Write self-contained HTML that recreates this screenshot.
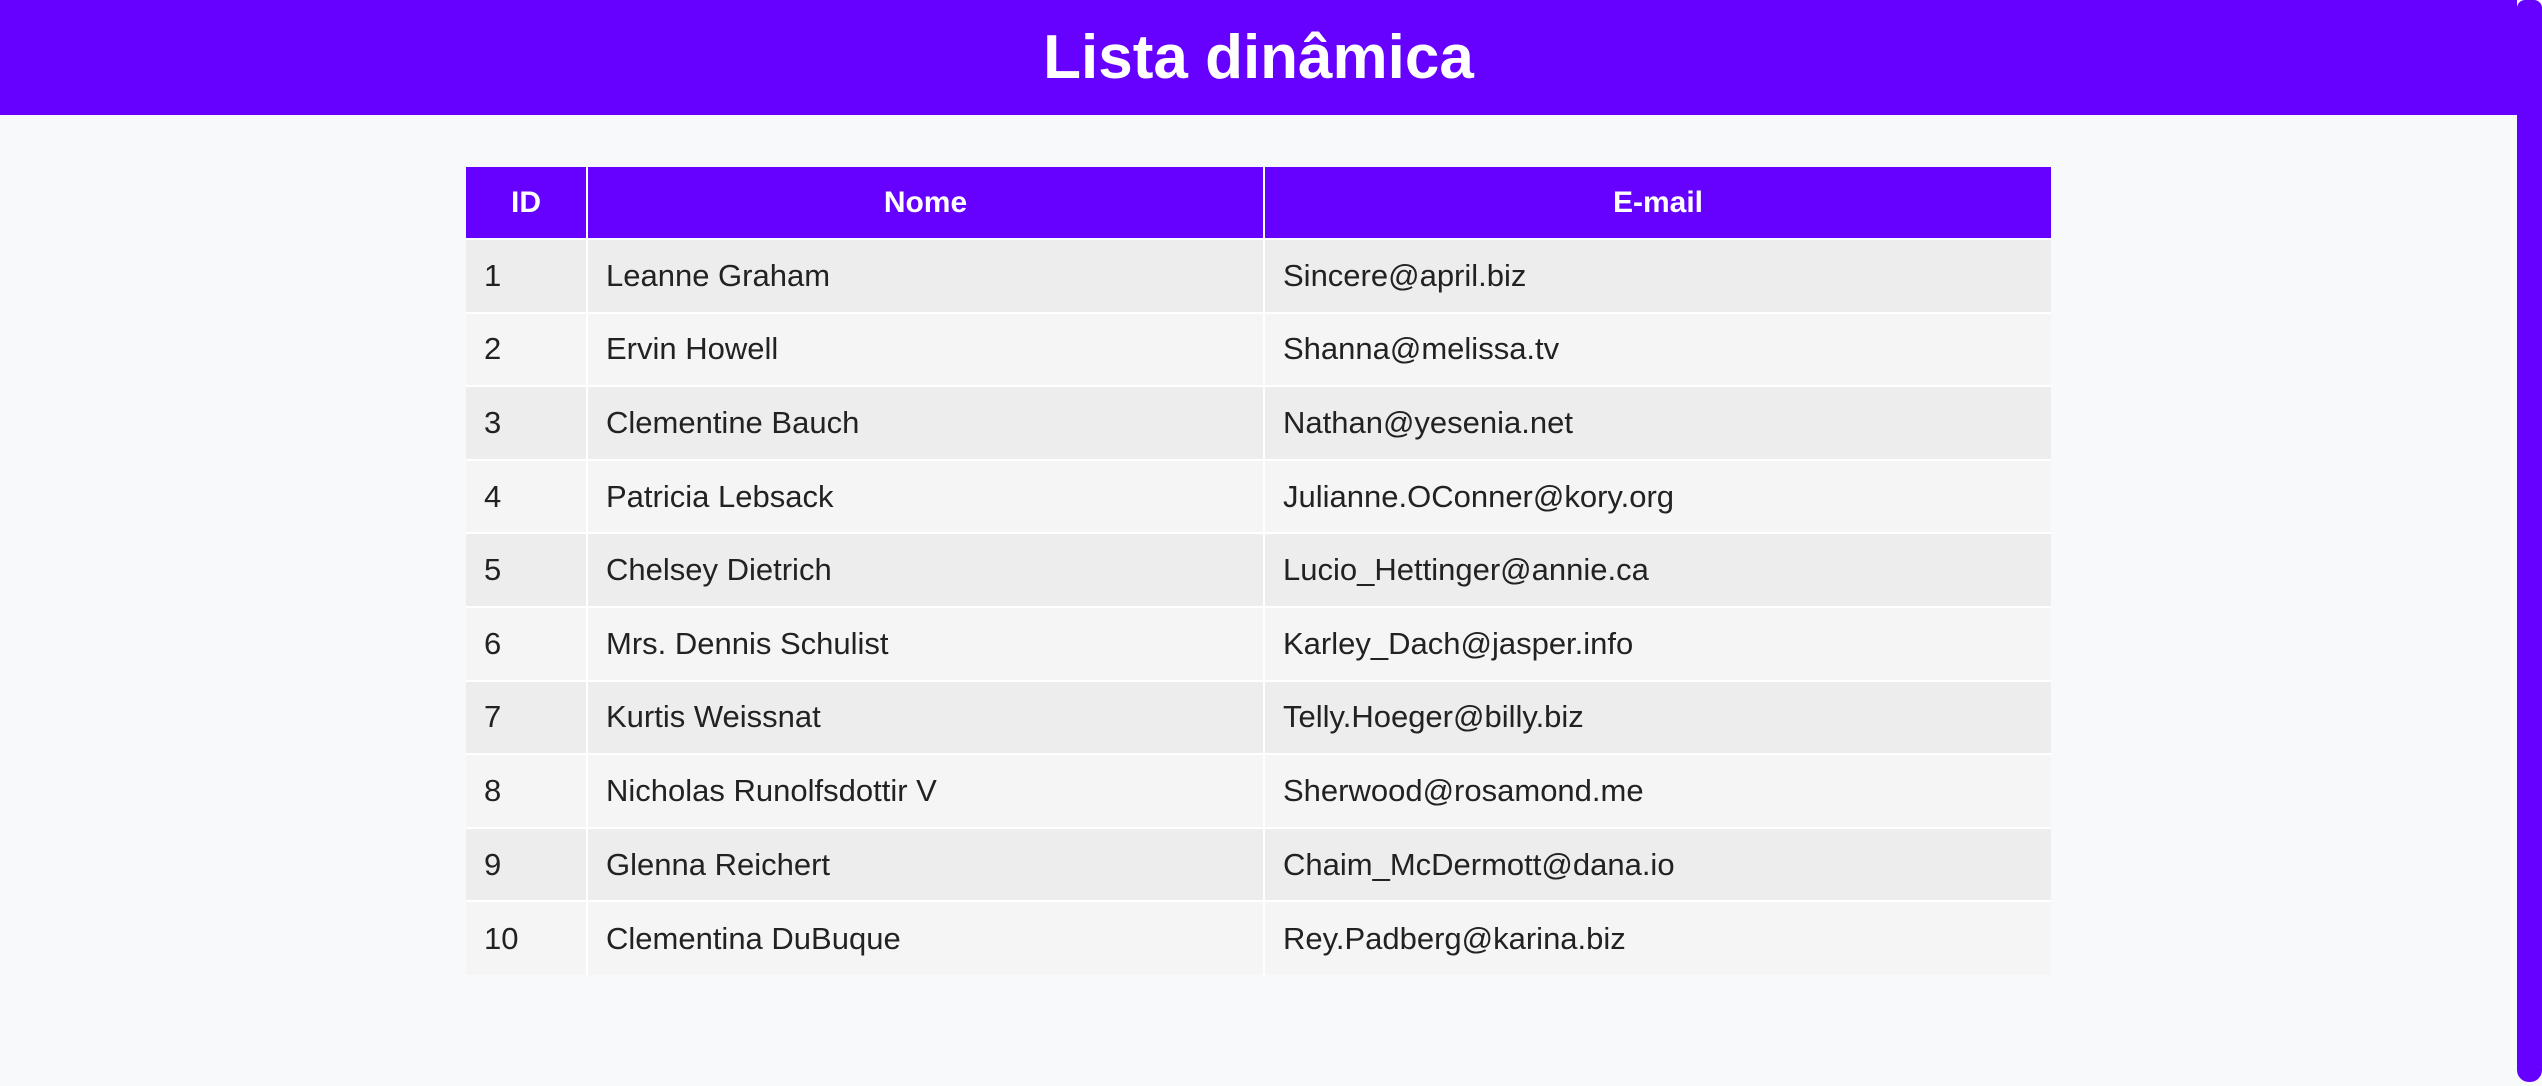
<!DOCTYPE html>
<html><head><meta charset="utf-8"><style>
html,body{margin:0;padding:0;width:2542px;height:1086px;overflow:hidden;background:#f8f9fb;font-family:"Liberation Sans",sans-serif;}
header{position:absolute;left:0;top:0;width:2517px;height:115px;background:#6600ff;color:#fff;text-align:center;font-size:62px;font-weight:bold;line-height:115px;}
.sb{position:absolute;left:2517px;top:0;width:25px;height:1082px;background:#6600ff;border-radius:8px 8px 12px 12px;}
table{position:absolute;left:466px;top:167px;width:1585px;border-collapse:collapse;font-size:31px;color:#222;}
th{background:#6600ff;color:#fff;height:71px;font-weight:bold;font-size:30px;border-left:2px solid #fff;padding:0;}
th:first-child,td:first-child{border-left:none;}
td{height:73.6px;padding:0 0 0 18px;border-left:2px solid #fff;border-top:2px solid #fff;box-sizing:border-box;}
tr:nth-child(odd) td{background:#ededed;}
tr:nth-child(even) td{background:#f5f5f5;}
</style></head><body>
<header>Lista dinâmica</header>
<div class="sb"></div>
<table>
<thead><tr><th style="width:120px">ID</th><th style="width:675px">Nome</th><th>E-mail</th></tr></thead>
<tbody>
<tr><td>1</td><td>Leanne Graham</td><td>Sincere@april.biz</td></tr>
<tr><td>2</td><td>Ervin Howell</td><td>Shanna@melissa.tv</td></tr>
<tr><td>3</td><td>Clementine Bauch</td><td>Nathan@yesenia.net</td></tr>
<tr><td>4</td><td>Patricia Lebsack</td><td>Julianne.OConner@kory.org</td></tr>
<tr><td>5</td><td>Chelsey Dietrich</td><td>Lucio_Hettinger@annie.ca</td></tr>
<tr><td>6</td><td>Mrs. Dennis Schulist</td><td>Karley_Dach@jasper.info</td></tr>
<tr><td>7</td><td>Kurtis Weissnat</td><td>Telly.Hoeger@billy.biz</td></tr>
<tr><td>8</td><td>Nicholas Runolfsdottir V</td><td>Sherwood@rosamond.me</td></tr>
<tr><td>9</td><td>Glenna Reichert</td><td>Chaim_McDermott@dana.io</td></tr>
<tr><td>10</td><td>Clementina DuBuque</td><td>Rey.Padberg@karina.biz</td></tr>
</tbody></table>
</body></html>
